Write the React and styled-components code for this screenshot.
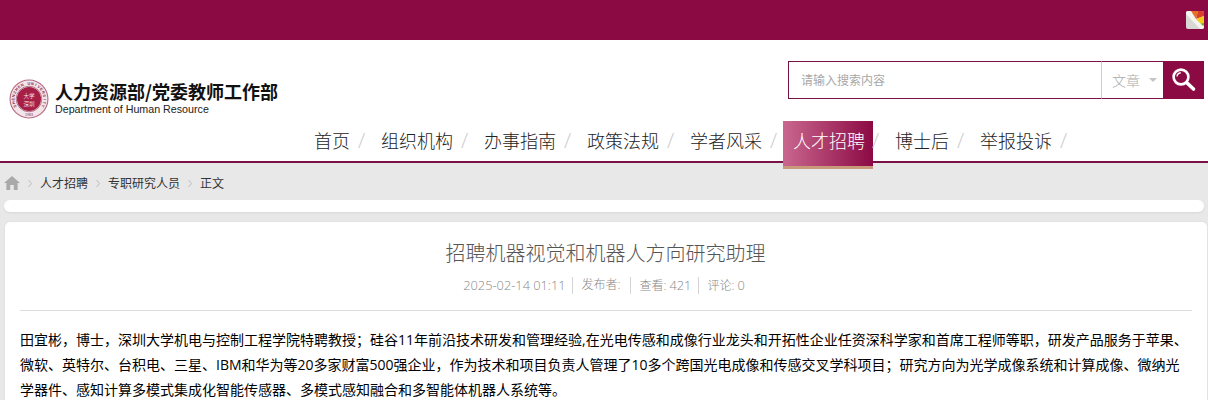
import React from 'react'
import styled, { createGlobalStyle } from 'styled-components'

const FONT = `"Open Sans", "Noto Sans CJK SC", sans-serif`
const MAROON = '#8c0a44'

const GlobalStyle = createGlobalStyle`
  html, body {
    margin: 0;
    padding: 0;
    background: #e8e8e8;
    font-family: ${FONT};
  }
`

const Page = styled.div`
  width: 1208px;
  height: 400px;
  overflow: hidden;
`

const TopBar = styled.div`
  height: 40px;
  background: ${MAROON};
  display: flex;
  justify-content: flex-end;
  align-items: flex-start;
  padding: 11px 4px 0 0;
  box-sizing: border-box;
`

const Header = styled.header`
  background: #fff;
  border-bottom: 2px solid #7a1144;
  height: 123px;
  box-sizing: border-box;
`

const HeaderTop = styled.div`
  height: 81px;
  display: flex;
  justify-content: space-between;
  align-items: flex-start;
  padding: 21px 4px 0 9px;
  box-sizing: border-box;
`

const Logo = styled.div`
  display: flex;
  align-items: center;
  gap: 6px;
  margin-top: 18px;
`

const LogoText = styled.div`
  display: flex;
  flex-direction: column;
  margin-bottom: 1px;
`

const LogoTitle = styled.div`
  font-family: "Noto Sans CJK SC", sans-serif;
  font-size: 18px;
  font-weight: 700;
  line-height: 21px;
  color: #111;
  white-space: nowrap;
`

const LogoSub = styled.div`
  font-family: "Liberation Sans", sans-serif;
  font-size: 10.7px;
  line-height: 15px;
  color: #222;
  white-space: nowrap;
`

const SearchBox = styled.div`
  display: flex;
  height: 38px;
`

const SearchInput = styled.div`
  width: 313px;
  box-sizing: border-box;
  border: 1px solid #7a1144;
  border-right: none;
  font-size: 12px;
  line-height: 37px;
  padding-left: 12px;
  color: #a8a8a8;
`

const SearchSelect = styled.div`
  width: 62px;
  box-sizing: border-box;
  border-left: 1px solid #ccc;
  border-top: 1px solid #7a1144;
  border-bottom: 1px solid #7a1144;
  display: flex;
  align-items: center;
  padding-left: 10px;
  gap: 9px;
  font-size: 14px;
  font-weight: 300;
  color: #aaa;
`

const Caret = styled.span`
  width: 0;
  height: 0;
  border-left: 4px solid transparent;
  border-right: 4px solid transparent;
  border-top: 4px solid #c4c4c4;
`

const SearchButton = styled.div`
  width: 41px;
  background: ${MAROON};
  display: flex;
  align-items: center;
  justify-content: center;
`

const Nav = styled.nav`
  display: flex;
  align-items: flex-start;
  padding-left: 304px;
`

const NavItem = styled.a`
  display: flex;
  box-sizing: border-box;
  height: 48px;
  padding: 8px ${p => (p.$active ? '8px' : '10px')} 0 10px;
  margin-right: ${p => (p.$active ? '1px' : '0')};
  font-size: 18px;
  font-weight: 300;
  line-height: 24px;
  color: ${p => (p.$active ? '#fff' : '#222')};
  background: ${p => (p.$active ? 'linear-gradient(to right, #c9678f, #8c0a44)' : 'none')};
  border-bottom: ${p => (p.$active ? '3px solid #c9997c' : 'none')};
  white-space: nowrap;
`

const Slash = styled.span`
  font-size: 21px;
  line-height: 38px;
  height: 40px;
  font-weight: 300;
  color: #ccc;
  width: 12px;
  margin-left: -2px;
  margin-right: 1px;
`

const Crumbs = styled.div`
  height: 37px;
  display: flex;
  align-items: center;
  padding: 3px 0 0 4px;
  box-sizing: border-box;
  font-size: 12px;
  color: #333;
`

const CrumbSep = styled.span`
  width: 4px;
  height: 7px;
  margin: 0 8px;
  display: flex;
`

const ThinBar = styled.div`
  margin-left: 4px;
  width: 1200px;
  height: 12px;
  box-sizing: border-box;
  background: #fff;
  border-radius: 6px;
  box-shadow: 0 1px 2px #d8d8d8;
`

const Card = styled.article`
  margin: 10px 0 0 5px;
  width: 1202px;
  height: 300px;
  box-sizing: border-box;
  background: #fff;
  border-radius: 5px 5px 0 0;
  box-shadow: 0 0 2px #d4d4d4;
  padding: 17px 15px 0;
`

const Title = styled.h1`
  margin: 0 0 0 -1px;
  font-size: 20px;
  font-weight: 300;
  line-height: 30px;
  text-align: center;
  color: #555;
`

const Meta = styled.div`
  margin-top: 8px;
  padding: 0 6px 16px 0;
  display: flex;
  justify-content: center;
  font-size: 12px;
  font-weight: 300;
  line-height: 16px;
  color: #888;
  border-bottom: 1px solid #ddd;
`

const MetaItem = styled.span`
  padding: 0 6.5px 0 8.5px;
  border-left: ${p => (p.$first ? 'none' : '1px solid #d4d4d4')};
  white-space: pre;
`

const Num = styled.span`
  font-size: 12.8px;
`

const Body = styled.p`
  margin: 16px 0 0;
  font-size: 14px;
  line-height: 25px;
  color: #000;
`

const HomeIcon = () => (
  <svg width="16" height="14" viewBox="0 0 16 14">
    <path d="M8 0 L16 7 L13.6 7 L13.6 14 L9.8 14 L9.8 9 L6.2 9 L6.2 14 L2.4 14 L2.4 7 L0 7 Z" fill="#a9a9a9" />
  </svg>
)

const Chevron = () => (
  <svg width="4" height="7" viewBox="0 0 4 7">
    <path d="M0.5 0 L3.5 3.5 L0.5 7" fill="none" stroke="#bbb" />
  </svg>
)

const Skin = () => (
  <svg width="18" height="18" viewBox="0 0 18 18">
    <rect width="18" height="18" rx="2" fill="#d8d8d4" />
    <path d="M0 2 Q0 0 2 0 H6 L18 14 V16 Q18 18 16 18 H14 L0 3 Z" fill="#f4f4f0" />
    <path d="M5 0 H12 L10 8 Z" fill="#e8702a" />
    <path d="M12 0 H16 Q18 0 18 2 V5 L10 8 Z" fill="#d8402c" />
    <path d="M18 5 V12 L14.5 12.5 L10 8 Z" fill="#f2cc1c" />
    <path d="M14.5 12.5 L18 12 V14 L17 15 Z" fill="#7aa82e" />
  </svg>
)

const Magnifier = () => (
  <svg width="26" height="26" viewBox="0 0 26 26">
    <circle cx="10" cy="10" r="7.4" fill="none" stroke="#fff" strokeWidth="2.6" />
    <path d="M6 9.5 A4.2 4.2 0 0 1 9.8 5.8" fill="none" stroke="#fff" strokeWidth="1.4" />
    <path d="M15.8 15.8 L22.5 22" stroke="#fff" strokeWidth="3.6" strokeLinecap="round" />
  </svg>
)

const SEAL_LETTERS = 'SHENZHEN UNIVERSITY'.split('')

// letters set one by one round the ring of the seal
const Seal = () => (
  <svg width="40" height="40" viewBox="0 0 40 40">
    <circle cx="20" cy="20" r="19.5" fill="#b56a80" />
    <circle cx="20" cy="20" r="18.4" fill="#f3e6ea" />
    <circle cx="20" cy="20" r="12" fill="#a51f47" />
    <circle cx="20" cy="20" r="12.8" fill="none" stroke="#8c2a48" strokeWidth="0.6" />
    {SEAL_LETTERS.map((letter, i) => (
      <text
        key={i}
        x="20"
        y="5.6"
        textAnchor="middle"
        transform={`rotate(${-117 + i * 13} 20 20)`}
        fontFamily="Liberation Sans, sans-serif"
        fontSize="3.9"
        fontWeight="700"
        fill="#8c2a48"
      >
        {letter}
      </text>
    ))}
    <text x="20" y="37.4" textAnchor="middle" fontFamily="Liberation Sans, sans-serif" fontSize="3.6" fill="#8c2a48">1983</text>
    <text x="20" y="18.5" textAnchor="middle" fontFamily="Noto Sans CJK SC, sans-serif" fontSize="5.6" fill="#f6dfe4">大学</text>
    <text x="20" y="26.5" textAnchor="middle" fontFamily="Noto Sans CJK SC, sans-serif" fontSize="5.6" fill="#f6dfe4">深圳</text>
  </svg>
)

const NAV_ITEMS = ['首页', '组织机构', '办事指南', '政策法规', '学者风采', '人才招聘', '博士后', '举报投诉']
const CRUMBS = ['人才招聘', '专职研究人员', '正文']

function App () {
  return (
    <Page>
      <GlobalStyle />
      <TopBar><Skin /></TopBar>
      <Header>
        <HeaderTop>
          <Logo>
            <Seal />
            <LogoText>
              <LogoTitle>人力资源部/党委教师工作部</LogoTitle>
              <LogoSub>Department of Human Resource</LogoSub>
            </LogoText>
          </Logo>
          <SearchBox>
            <SearchInput>请输入搜索内容</SearchInput>
            <SearchSelect>文章<Caret /></SearchSelect>
            <SearchButton><Magnifier /></SearchButton>
          </SearchBox>
        </HeaderTop>
        <Nav>
          {NAV_ITEMS.map(item => (
            <React.Fragment key={item}>
              <NavItem $active={item === '人才招聘'}>{item}</NavItem>
              <Slash>/</Slash>
            </React.Fragment>
          ))}
        </Nav>
      </Header>
      <Crumbs>
        <HomeIcon />
        {CRUMBS.map(crumb => (
          <React.Fragment key={crumb}>
            <CrumbSep><Chevron /></CrumbSep>
            <span>{crumb}</span>
          </React.Fragment>
        ))}
      </Crumbs>
      <ThinBar />
      <Card>
        <Title>招聘机器视觉和机器人方向研究助理</Title>
        <Meta>
          <MetaItem $first><Num>2025-02-14 01:11</Num></MetaItem>
          <MetaItem>发布者: </MetaItem>
          <MetaItem>查看: <Num>421</Num></MetaItem>
          <MetaItem>评论: <Num>0</Num></MetaItem>
        </Meta>
        <Body>
          田宜彬，博士，深圳大学机电与控制工程学院特聘教授；硅谷11年前沿技术研发和管理经验,在光电传感和成像行业龙头和开拓性企业任资深科学家和首席工程师等职，研发产品服务于苹果、微软、英特尔、台积电、三星、IBM和华为等20多家财富500强企业，作为技术和项目负责人管理了10多个跨国光电成像和传感交叉学科项目；研究方向为光学成像系统和计算成像、微纳光学器件、感知计算多模式集成化智能传感器、多模式感知融合和多智能体机器人系统等。
        </Body>
      </Card>
    </Page>
  )
}

export default App
